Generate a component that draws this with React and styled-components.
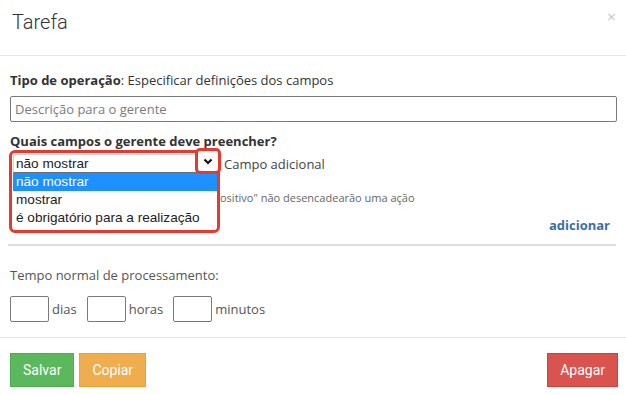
import React from "react";
import styled, { createGlobalStyle } from "styled-components";

const Global = createGlobalStyle`
  html, body { margin: 0; padding: 0; background: #fff; }
  body { font-family: "Open Sans", Lato, sans-serif; color: #333; }
  * { box-sizing: border-box; }
`;

const Modal = styled.div`
  width: 626px;
  height: 395px;
  background: #fff;
  display: flex;
  flex-direction: column;
  overflow: hidden;
`;

const Header = styled.div`
  height: 56px;
  border-bottom: 1px solid #e5e5e5;
  padding: 8px 12px 0 12px;
  display: flex;
  justify-content: space-between;
  align-items: flex-start;
`;

const Title = styled.h4`
  margin: 0;
  font-family: Roboto, "Open Sans", sans-serif;
  font-weight: 300;
  font-size: 20px;
  line-height: 28px;
  color: #333;
`;

const Close = styled.span`
  font-family: "DejaVu Sans", sans-serif;
  font-size: 13px;
  line-height: 16px;
  color: #c8c8c8;
  margin-top: 1px;
  margin-right: -3px;
`;

const Body = styled.div`
  padding: 0 9px 15px 10px;
  display: flex;
  flex-direction: column;
`;

const Label = styled.div`
  font-size: 13px;
  line-height: 18px;
  margin-top: ${(p) => p.$mt || 0}px;
  color: ${(p) => p.$color || "#333"};
  font-weight: ${(p) => (p.$bold ? 700 : 400)};
`;

const Strong = styled.b`
  font-weight: 700;
`;

const TextInput = styled.div`
  margin-top: 7px;
  height: 26px;
  border: 1px solid #7a7a7a;
  border-radius: 2px;
  padding: 0 4px;
  font-size: 13px;
  line-height: 24px;
  color: #7b7b7b;
`;

const SelectRow = styled.div`
  position: relative;
  margin-top: 4px;
  height: 19px;
  display: flex;
  align-items: center;
  gap: 7px;
`;

const SelectBox = styled.div`
  margin-left: 3px;
  width: 204px;
  height: 19px;
  border: 1px solid #d6d6d6;
  border-bottom-color: #6b6b6b;
  font-family: "Liberation Sans", Arial, sans-serif;
  font-size: 13.6px;
  line-height: 17px;
  padding-left: 2px;
  color: #222;
  background: #fff;
`;

const SideText = styled.span`
  font-size: 13px;
  line-height: 18px;
  color: #444;
`;

const Annotation = styled.div`
  position: absolute;
  left: -1px;
  top: -4px;
  width: 211px;
  height: 83px;
  border: 3px solid #e53a2f;
  border-radius: 6px;
  pointer-events: none;
  z-index: 3;
`;

const ArrowBox = styled.div`
  position: absolute;
  left: 185px;
  top: -6px;
  width: 26px;
  height: 26px;
  border: 3px solid #e53a2f;
  border-radius: 5px;
  background: #fff;
  display: flex;
  align-items: center;
  justify-content: center;
  z-index: 4;
`;

const Menu = styled.ul`
  position: absolute;
  left: 3px;
  top: 19px;
  width: 204px;
  margin: 0;
  padding: 0;
  list-style: none;
  background: #fff;
  z-index: 2;
  font-family: "Liberation Sans", Arial, sans-serif;
  font-size: 13.6px;
`;

const Option = styled.li`
  height: 18px;
  line-height: 18px;
  padding-left: 3px;
  background: ${(p) => (p.$active ? "#1e90ff" : "#fff")};
  color: ${(p) => (p.$active ? "#fff" : "#222")};
`;

const Hint = styled.div`
  margin-top: 16px;
  padding-left: 210px;
  font-size: 11px;
  line-height: 18px;
  color: #666;
  white-space: nowrap;
`;

const AddRow = styled.div`
  margin-top: 9px;
  display: flex;
  justify-content: flex-end;
  padding-right: 7px;
`;

const AddLink = styled.a`
  font-size: 13px;
  line-height: 18px;
  font-weight: 700;
  color: #3a6fa8;
  text-decoration: none;
`;

const Divider = styled.hr`
  margin: 10px 1px 0 -2px;
  border: 0;
  height: 2px;
  background: #dcdcdc;
`;

const TimeRow = styled.div`
  margin-top: 12px;
  display: flex;
  align-items: center;
`;

const TimeInput = styled.div`
  width: 39px;
  height: 26px;
  border: 1px solid #7a7a7a;
  border-radius: 2px;
  margin-right: 3px;
`;

const Unit = styled.span`
  font-size: 13px;
  line-height: 18px;
  color: #555;
  margin-right: 10px;
`;

const Footer = styled.div`
  border-top: 1px solid #e5e5e5;
  padding: 15px 8px 0 10px;
  display: flex;
  gap: 5px;
`;

const Button = styled.button`
  height: 34px;
  padding: 0 12px;
  border: 1px solid ${(p) => p.$border};
  background: ${(p) => p.$bg};
  color: #fff;
  font-family: Roboto, "Liberation Sans", sans-serif;
  font-size: 14px;
  border-radius: 0;
  margin-left: ${(p) => (p.$push ? "auto" : "0")};
`;

const Chevron = () => (
  <svg width="10" height="7" viewBox="0 0 10 7">
    <polyline points="1.5,1.5 5,5 8.5,1.5" fill="none" stroke="#111" strokeWidth="2.2" />
  </svg>
);

export default function App() {
  return (
    <>
      <Global />
      <Modal>
        <Header>
          <Title>Tarefa</Title>
          <Close>×</Close>
        </Header>
        <Body>
          <Label $mt={15}>
            <Strong>Tipo de operação</Strong>: Especificar definições dos campos
          </Label>
          <TextInput>Descrição para o gerente</TextInput>
          <Label $mt={10} $bold>
            Quais campos o gerente deve preencher?
          </Label>
          <SelectRow>
            <SelectBox>não mostrar</SelectBox>
            <SideText>Campo adicional</SideText>
            <Menu>
              <Option $active>não mostrar</Option>
              <Option>mostrar</Option>
              <Option>é obrigatório para a realização</Option>
            </Menu>
            <Annotation />
            <ArrowBox>
              <Chevron />
            </ArrowBox>
          </SelectRow>
          <Hint>ositivo" não desencadearão uma ação</Hint>
          <AddRow>
            <AddLink>adicionar</AddLink>
          </AddRow>
          <Divider />
          <Label $mt={20} $color="#555">
            Tempo normal de processamento:
          </Label>
          <TimeRow>
            <TimeInput />
            <Unit>dias</Unit>
            <TimeInput />
            <Unit>horas</Unit>
            <TimeInput />
            <Unit>minutos</Unit>
          </TimeRow>
        </Body>
        <Footer>
          <Button $bg="#5cb85c" $border="#4cae4c">Salvar</Button>
          <Button $bg="#f0ad4e" $border="#eea236">Copiar</Button>
          <Button $bg="#d9534f" $border="#d43f3a" $push>Apagar</Button>
        </Footer>
      </Modal>
    </>
  );
}
